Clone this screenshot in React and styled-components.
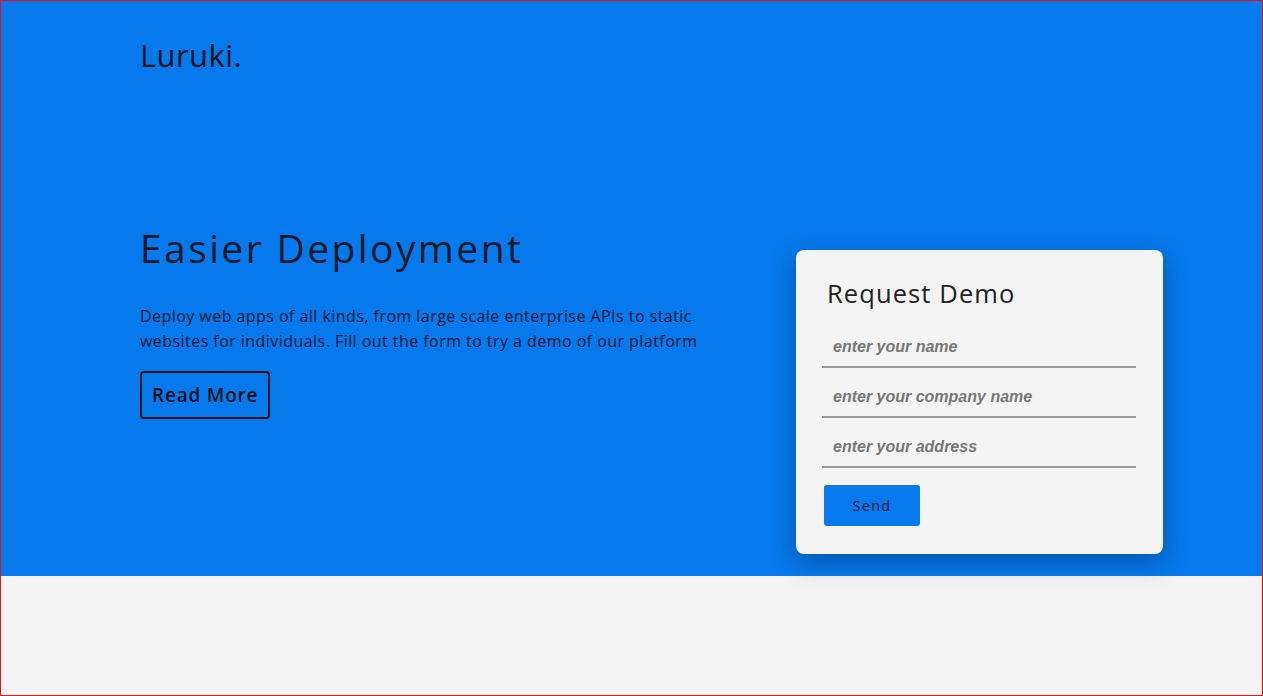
import styled, { createGlobalStyle } from 'styled-components'

const GlobalStyle = createGlobalStyle`
 * {
  box-sizing: border-box;
 }
 body {
  margin: 0;
  background-color: #f4f4f4;
  font-family: 'Open Sans', 'Liberation Sans', sans-serif;
 }
`

const Page = styled.div`
 min-height: 100vh;
 border: 1px solid #e8121b;
 background-color: #f4f4f4;
`

const Hero = styled.section`
 background-color: #067aec;
 height: 575px;
 padding: 0 99px 0 139px;
 display: flex;
 flex-direction: column;
`

const Logo = styled.h2`
 margin: 0;
 padding-top: 33px;
 font-size: 31px;
 font-weight: 400;
 color: #0b0f1c;
 letter-spacing: 0.4px;
`

const Row = styled.div`
 display: flex;
 justify-content: space-between;
 align-items: flex-start;
 margin-top: 146px;
`

const Intro = styled.div`
 display: flex;
 flex-direction: column;
 align-items: flex-start;
 width: 575px;
`

const Heading = styled.h1`
 margin: 0;
 font-size: 39px;
 font-weight: 400;
 line-height: 52px;
 letter-spacing: 2.4px;
 color: #15192a;
`

const Text = styled.p`
 margin: 30px 0 17px;
 font-size: 16px;
 line-height: 25px;
 letter-spacing: 0.45px;
 color: #0b1536;
`

const ReadMore = styled.button`
 height: 48px;
 padding: 0 10px;
 background: transparent;
 border: 2px solid #0b0f1c;
 border-radius: 4px;
 font-family: inherit;
 font-size: 19px;
 font-weight: 600;
 letter-spacing: 0.8px;
 color: #0b0f1c;
 cursor: pointer;
`

const Card = styled.form`
 margin-top: 28px;
 width: 367px;
 height: 304px;
 padding: 26px 26px 0 26px;
 background-color: #f4f4f4;
 border-radius: 8px;
 box-shadow: 0 8px 24px rgba(0, 40, 100, 0.45);
 display: flex;
 flex-direction: column;
 align-items: flex-start;
`

const CardTitle = styled.h3`
 margin: 0 0 8px 5px;
 font-size: 25.5px;
 font-weight: 400;
 letter-spacing: 1.1px;
 color: #222;
`

const Field = styled.input`
 width: 314px;
 height: 50px;
 padding: 10px 11px 0;
 background: transparent;
 border: none;
 border-bottom: 2px solid #9a9a9a;
 font-family: 'Liberation Sans', Arial, sans-serif;
 font-size: 16px;
 font-style: italic;
 font-weight: 700;
 outline: none;
 &::placeholder {
  color: #777;
 }
`

const SendButton = styled.button`
 margin: 17px 0 0 2px;
 width: 96px;
 height: 41px;
 background-color: #067aec;
 border: none;
 border-radius: 3px;
 font-family: inherit;
 font-size: 14.5px;
 letter-spacing: 1.3px;
 color: #0b1536;
 cursor: pointer;
`

const Footer = styled.div`
 height: 118px;
`

function App() {
 return (
  <Page>
   <GlobalStyle />
   <Hero>
    <Logo>Luruki.</Logo>
    <Row>
     <Intro>
      <Heading>Easier Deployment</Heading>
      <Text>
       Deploy web apps of all kinds, from large scale enterprise APIs to static
       websites for individuals. Fill out the form to try a demo of our platform
      </Text>
      <ReadMore type='button'>Read More</ReadMore>
     </Intro>
     <Card onSubmit={(e) => e.preventDefault()}>
      <CardTitle>Request Demo</CardTitle>
      <Field type='text' placeholder='enter your name' />
      <Field type='text' placeholder='enter your company name' />
      <Field type='text' placeholder='enter your address' />
      <SendButton type='submit'>Send</SendButton>
     </Card>
    </Row>
   </Hero>
   <Footer />
  </Page>
 )
}

export default App
